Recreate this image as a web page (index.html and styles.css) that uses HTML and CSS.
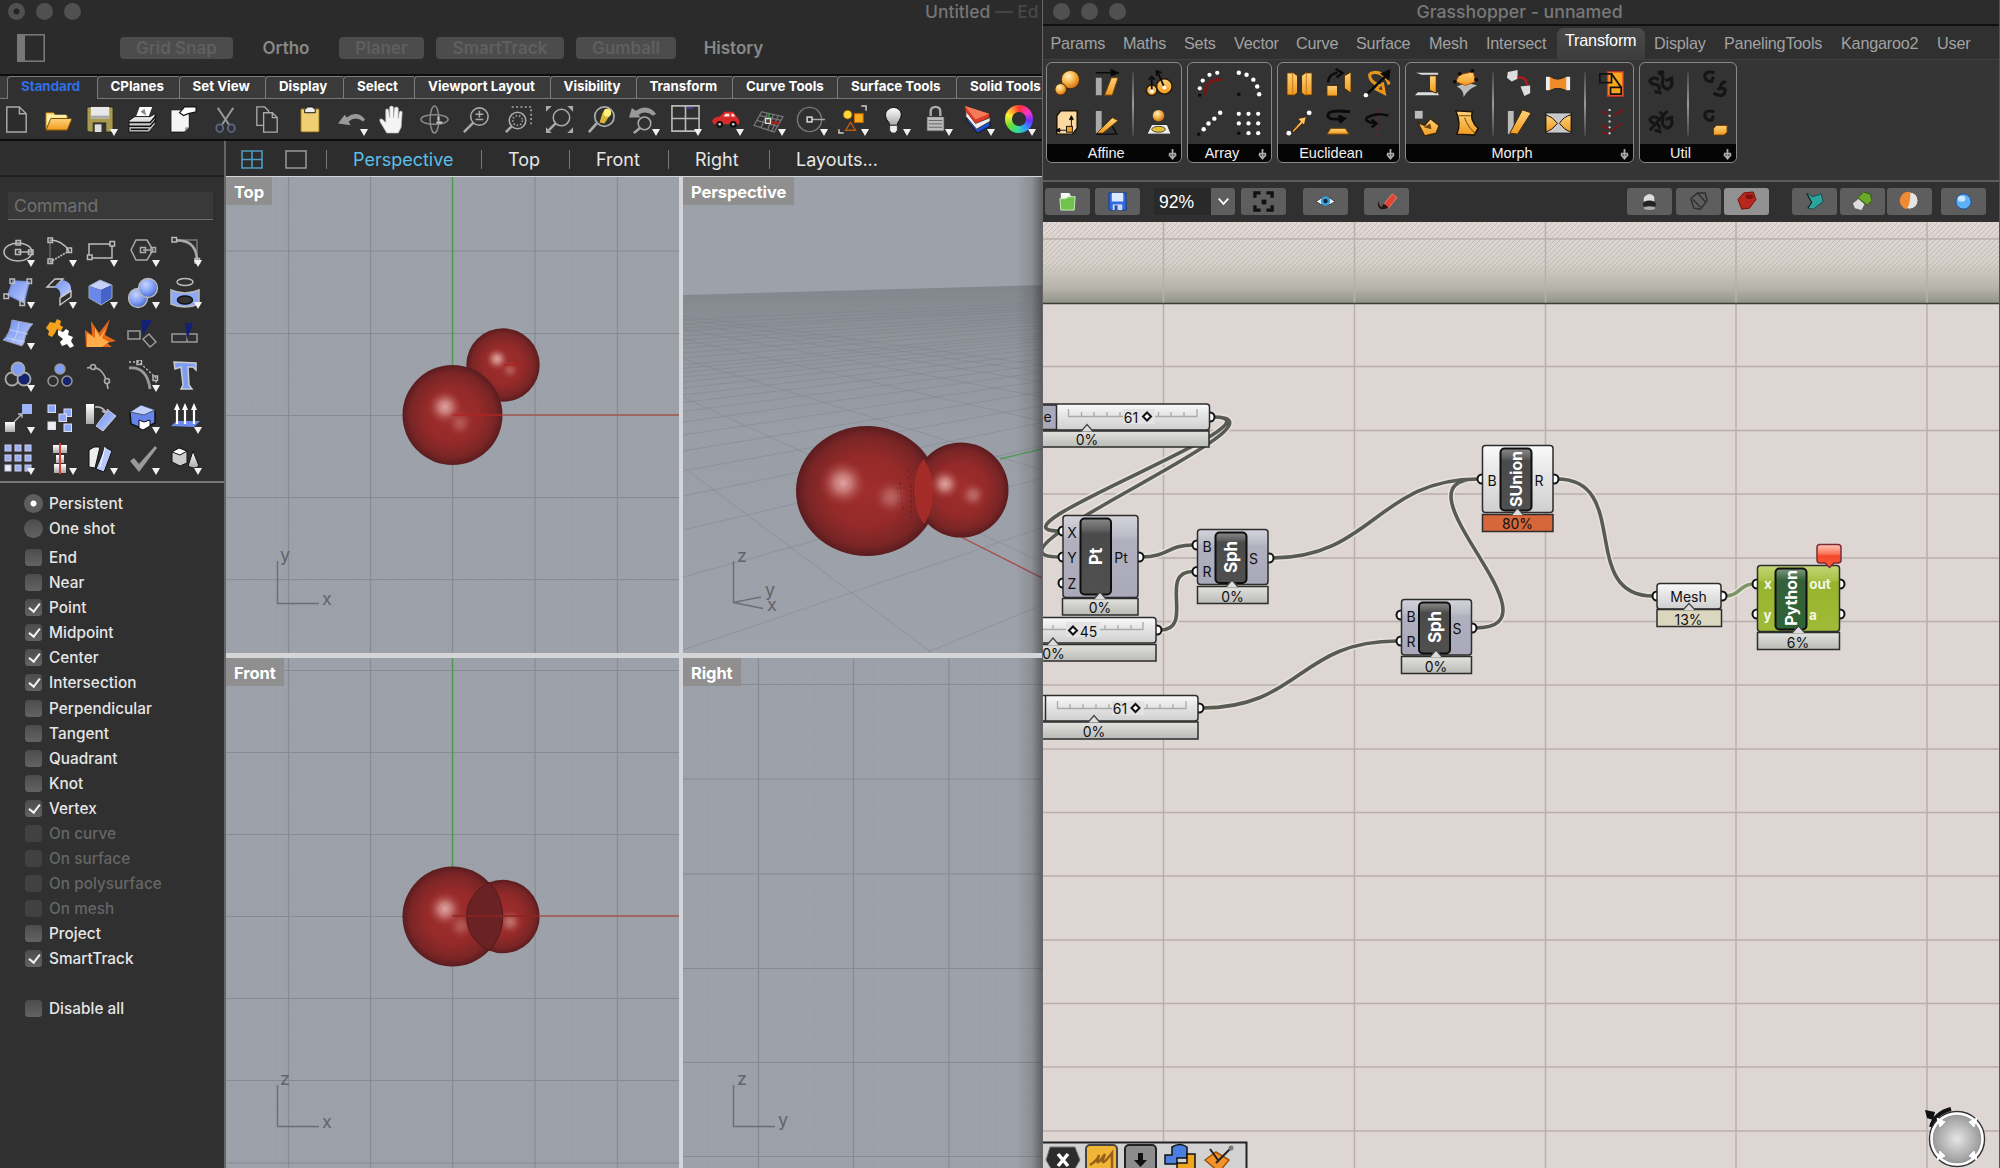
FILE: index.html
```html
<!DOCTYPE html>
<html lang="en">
<head>
<meta charset="utf-8">
<title>Rhino and Grasshopper</title>
<link rel="stylesheet" href="styles.css">
</head>
<body>
<svg class="defs" width="0" height="0">
  <defs>
    <linearGradient id="gold" x1="0" y1="0" x2="0" y2="1"><stop offset="0" stop-color="#ffd27a"/><stop offset="1" stop-color="#f09a1e"/></linearGradient>
    <linearGradient id="blue" x1="0" y1="0" x2="1" y2="1"><stop offset="0" stop-color="#6d8df0"/><stop offset="1" stop-color="#c3d0fb"/></linearGradient>
    <linearGradient id="grey" x1="0" y1="0" x2="0" y2="1"><stop offset="0" stop-color="#fff"/><stop offset="1" stop-color="#a8a8a8"/></linearGradient>
    <radialGradient id="ballGold" cx=".38" cy=".32" r=".7"><stop offset="0" stop-color="#fff0c4"/><stop offset=".5" stop-color="#f9b64a"/><stop offset="1" stop-color="#c86a10"/></radialGradient>
    <radialGradient id="ballBlue" cx=".38" cy=".32" r=".7"><stop offset="0" stop-color="#c6d6ff"/><stop offset=".6" stop-color="#7f9df5"/><stop offset="1" stop-color="#4a66c8"/></radialGradient>
    <radialGradient id="sphere" cx=".5" cy=".5" r=".5"><stop offset="0" stop-color="#a02e2d"/><stop offset=".55" stop-color="#942a29"/><stop offset=".85" stop-color="#7a2526"/><stop offset="1" stop-color="#5a1c1f"/></radialGradient>
    <radialGradient id="glow"><stop offset="0" stop-color="#dfa3a0"/><stop offset=".35" stop-color="#cf8582" stop-opacity=".85"/><stop offset="1" stop-color="#a03634" stop-opacity="0"/></radialGradient>
    <linearGradient id="ground" x1="0" y1="0" x2="0" y2="1"><stop offset="0" stop-color="#82868d"/><stop offset=".16" stop-color="#90949b"/><stop offset=".4" stop-color="#9a9ea6"/><stop offset="1" stop-color="#9ea2aa"/></linearGradient>
    <linearGradient id="edge"><stop offset="0" stop-color="#222" stop-opacity="0"/><stop offset=".6" stop-color="#222" stop-opacity=".14"/><stop offset="1" stop-color="#222" stop-opacity=".5"/></linearGradient>
    <linearGradient id="body" x1="0" y1="0" x2="0" y2="1"><stop offset="0" stop-color="#d4d4dc"/><stop offset=".25" stop-color="#bcbcc8"/><stop offset=".3" stop-color="#b0b0bf"/><stop offset="1" stop-color="#a9a9ba"/></linearGradient>
    <linearGradient id="pale" x1="0" y1="0" x2="0" y2="1"><stop offset="0" stop-color="#fafafa"/><stop offset=".35" stop-color="#e9e9e9"/><stop offset="1" stop-color="#cfcfcf"/></linearGradient>
    <linearGradient id="bar" x1="0" y1="0" x2="0" y2="1"><stop offset="0" stop-color="#e2e2df"/><stop offset="1" stop-color="#b9bbb7"/></linearGradient>
    <linearGradient id="plate" x1="0" y1="0" x2="0" y2="1"><stop offset="0" stop-color="#8a8a8a"/><stop offset=".15" stop-color="#606060"/><stop offset=".2" stop-color="#4a4a4a"/><stop offset="1" stop-color="#505050"/></linearGradient>
    <linearGradient id="pyBody" x1="0" y1="0" x2="0" y2="1"><stop offset="0" stop-color="#c3d675"/><stop offset=".22" stop-color="#aac147"/><stop offset=".25" stop-color="#97b32c"/><stop offset="1" stop-color="#a0bb38"/></linearGradient>
    <linearGradient id="pyPlate" x1="0" y1="0" x2="0" y2="1"><stop offset="0" stop-color="#7c9c7c"/><stop offset=".2" stop-color="#35603a"/><stop offset="1" stop-color="#2f6336"/></linearGradient>
    <linearGradient id="alert" x1="0" y1="0" x2="0" y2="1"><stop offset="0" stop-color="#ffc9b8"/><stop offset=".4" stop-color="#fb7458"/><stop offset=".5" stop-color="#f2492c"/><stop offset="1" stop-color="#ff5a38"/></linearGradient>
    <linearGradient id="band" x1="0" y1="0" x2="0" y2="1"><stop offset="0" stop-color="#e0d9d5"/><stop offset=".5" stop-color="#d6d0ca"/><stop offset=".82" stop-color="#b3b1a8"/><stop offset="1" stop-color="#8f9187"/></linearGradient>
    <radialGradient id="dial"><stop offset="0" stop-color="#e6e6e6"/><stop offset="1" stop-color="#8f8f8f"/></radialGradient>
    <pattern id="hatch" width="5" height="5" patternUnits="userSpaceOnUse"><path d="M0 5L5 0" stroke="#b8aca6" stroke-width=".9" opacity=".7"/></pattern>
    <pattern id="minor" width="8.23" height="8.23" patternUnits="userSpaceOnUse"><path d="M.5 0V8.23M0 .5H8.23" stroke="#8b9098" stroke-width=".8" opacity=".2" fill="none"/></pattern>
  </defs>
</svg>

<main class="screen">
<section class="rhino">
  <header class="titlebar">
    <div class="lights"><i class="dirty"></i><i></i><i></i></div>
    <h1>Untitled <span>— Ed</span></h1>
  </header>
  <div class="snapbar">
    <svg width="28" height="28" viewBox="0 0 28 28"><rect x=".8" y=".8" width="26.4" height="26.4" fill="none" stroke="#777" stroke-width="1.6"/><rect x="1" y="1" width="7" height="26" fill="#777"/></svg>
    <b class="on">Grid Snap</b><b>Ortho</b><b class="on">Planer</b><b class="on">SmartTrack</b><b class="on">Gumball</b><b>History</b>
  </div>
  <nav class="tabs">
    <a class="current">Standard</a><a>CPlanes</a><a>Set View</a><a>Display</a><a>Select</a><a>Viewport Layout</a><a>Visibility</a><a>Transform</a><a>Curve Tools</a><a>Surface Tools</a><a>Solid Tools</a>
  </nav>
  <div class="tools">
    <i><svg viewBox="0 0 32 32"><path d="M6 3H19L26 10V29H6ZM19 3V10H26" fill="#2c2c2c" stroke="#aaa" stroke-width="1.5"/></svg></i>
    <i><svg viewBox="0 0 32 32"><path d="M3 26V9H11L13 12H25V16" fill="#fbe38a" stroke="#a06d0c"/><path d="M3 27L8 15H30L25 27Z" fill="url(#gold)" stroke="#6d4a05"/><path d="M4 11H24V14H8L4 22Z" fill="#fff0a5"/></svg></i>
    <i class="dd"><svg viewBox="0 0 32 32"><path d="M2 3H29V29H4L2 27Z" fill="#a99a4c" stroke="#222"/><path d="M6 3H25V15H6Z" fill="#e8e8e8"/><path d="M6 12H25V15H6Z" fill="#aaa"/><path d="M8 19H22V29H8Z" fill="#333"/><path d="M10 21H17V29H10Z" fill="#ddd"/></svg></i>
    <i><svg viewBox="0 0 32 32"><path d="M9 14L13 3H26L22 14Z" fill="#fff"/><path d="M14 8L18 5L20 12" fill="#888"/><path d="M2 17L8 13H24L29 10V21L23 29H2Z" fill="url(#grey)" stroke="#111"/><path d="M2 19H24L30 12M2 23H24L30 16M4 26H22" stroke="#111" stroke-width="1.6" fill="none"/></svg></i>
    <i><svg viewBox="0 0 32 32"><path d="M3 6H22V24L17 29H3Z" fill="#f4f4f4" stroke="#111"/><path d="M12 9L17 3H29V8L21 10L16 12Z" fill="#fff" stroke="#111" stroke-width="1.3"/><path d="M18 24H22L17 29Z" fill="#999"/></svg></i>
    <i><svg viewBox="0 0 32 32"><path d="M8 4L20 22M24 4L12 22" stroke="#999" stroke-width="2"/><g fill="none" stroke="#5c6480" stroke-width="2"><ellipse cx="10" cy="25" rx="3.5" ry="4"/><ellipse cx="22" cy="25" rx="3.5" ry="4"/></g></svg></i>
    <i><svg viewBox="0 0 32 32" fill="#303030" stroke="#aaa" stroke-width="1.4"><path d="M5 3H13L17 7V22H5Z"/><path d="M12 9H21L26 14V29H12ZM21 9V14H26"/></svg></i>
    <i><svg viewBox="0 0 32 32"><rect x="7" y="5" width="19" height="24" rx="1" fill="#f0cf72" stroke="#6a5010"/><path d="M11 9V6L14 3H19L22 6V9Z" fill="#eee" stroke="#111"/></svg></i>
    <i class="dd"><svg viewBox="0 0 32 32"><path d="M2 20L9 11L11 14Q22 6 30 16L28 18Q20 12 13 18L15 22Z" fill="#999"/></svg></i>
    <i><svg viewBox="0 0 32 32"><path d="M10 30L3 18Q2 14 6 16L9 19V6Q10 4 12 6L13 14V3Q15 1 17 3V14L18 4Q20 2 22 4V15L23 8Q26 6 26 9L25 24L22 30Z" fill="#f4f4f4" stroke="#aaa" stroke-width=".7"/></svg></i>
    <i><svg viewBox="0 0 32 32" fill="none" stroke="#888" stroke-width="1.6"><ellipse cx="16" cy="16" rx="14" ry="5"/><ellipse cx="16" cy="16" rx="4.5" ry="14"/><path d="M20 17V13M18 19H24" stroke="#ccc" stroke-width="2"/></svg></i>
    <i><svg viewBox="0 0 32 32" fill="none" stroke="#aaa" stroke-width="1.6"><circle cx="19" cy="13" r="9"/><path d="M13 19L3 29" stroke-width="2.6"/><path d="M19 7V14M15 10.500H23M15 16H23"/></svg></i>
    <i><svg viewBox="0 0 32 32" fill="none" stroke="#aaa" stroke-width="1.6"><path d="M9 3H29V22" stroke-dasharray="2 2.500"/><circle cx="15" cy="17" r="8.500"/><circle cx="15" cy="17" r="5" stroke-dasharray="1.500 2"/><path d="M9 23L3 29" stroke-width="2.600"/></svg></i>
    <i><svg viewBox="0 0 32 32" fill="none" stroke="#aaa" stroke-width="1.600"><circle cx="18" cy="14" r="8.500"/><path d="M12 20L5 27" stroke-width="2.600"/><path d="M2 2H8L2 8ZM30 2H24L30 8ZM30 30H24L30 24ZM2 30H8L2 24Z" fill="#aaa" stroke="none"/></svg></i>
    <i><svg viewBox="0 0 32 32" fill="none"><circle cx="19" cy="13" r="10" stroke="#aaa" stroke-width="1.800"/><path d="M14 19L17 9L24 6L25 11L19 20Z" fill="#d9b735"/><circle cx="22" cy="9" r="4" fill="#fff17a"/><path d="M11 20L3 29" stroke="#aaa" stroke-width="2.800"/></svg></i>
    <i class="dd"><svg viewBox="0 0 32 32" fill="none"><path d="M1 14L4 4L8 7Q20 -1 29 10L26 12Q18 6 11 11L13 14Z" fill="#999"/><circle cx="17" cy="20" r="6.500" stroke="#aaa" stroke-width="1.600"/><path d="M12 25L6 30" stroke="#aaa" stroke-width="2.500"/></svg></i>
    <i class="dd"><svg viewBox="0 0 32 32" fill="none" stroke="#b8b8b8" stroke-width="1.700"><path d="M2 2H30V28H2ZM16 2V28M2 15H30"/><path d="M17 4H24" stroke="#44a"/></svg></i>
    <i class="dd"><svg viewBox="0 0 32 32"><path d="M1 18Q3 13 9 13L14 8H23L27 14Q30 16 29 21H3Z" fill="#d92a2a"/><path d="M13 13L15 10H19V13ZM21 10H23L25 13H21Z" fill="#fbe9e9"/><circle cx="9" cy="21" r="3.500" fill="#111"/><circle cx="23" cy="21" r="3.500" fill="#111"/><circle cx="9" cy="21" r="1.300" fill="#ddd"/><circle cx="23" cy="21" r="1.300" fill="#ddd"/></svg></i>
    <i class="dd"><svg viewBox="0 0 32 32" fill="none" stroke="#777" stroke-width="1.300"><path d="M9 8L31 13L22 29L1 22ZM7 12L29 17M4 17L26 23M15 9L8 25M21 11L15 27M26 12L19 29"/><path d="M17 10L15 17" stroke="#2b8f38" stroke-width="2"/><path d="M16 18L27 20" stroke="#b01c1c" stroke-width="2.500"/><rect x="13" y="15" width="5" height="5" stroke="#ddd"/></svg></i>
    <i class="dd"><svg viewBox="0 0 32 32" fill="none" stroke="#777" stroke-width="1.500"><circle cx="15" cy="16" r="12.500"/><path d="M15 16H31" stroke="#aaa"/><rect x="12.500" y="13.500" width="5" height="5" fill="#2f2f2f" stroke="#ddd"/></svg></i>
    <i class="dd"><svg viewBox="0 0 32 32" fill="none"><path d="M25 2H30V7M2 26V30H7" stroke="#ccc" stroke-width="1.500"/><circle cx="11" cy="11" r="4.500" fill="#ffd93a" stroke="#a25a00"/><rect x="18" y="10" width="9" height="9" fill="#f6ae1e" stroke="#d06a00"/><path d="M14 19L19 27H9Z" stroke="#b65c12" stroke-width="1.500"/></svg></i>
    <i class="dd"><svg viewBox="0 0 32 32"><path d="M12 22Q12 19 9 16Q6 10 10 6Q16 1 22 6Q26 10 22 17Q20 19 20 22Z" fill="url(#grey)" stroke="#111"/><path d="M12 22H20V27L18 30H14L12 27Z" fill="#eee" stroke="#333"/></svg></i>
    <i class="dd"><svg viewBox="0 0 32 32"><path d="M11 14V8Q11 3 16 3Q21 3 21 8V14" fill="none" stroke="#aaa" stroke-width="2.500"/><rect x="7" y="13" width="18" height="15" fill="#bbb" stroke="#333"/><path d="M9 17H23M9 20.500H23M9 24H23" stroke="#666"/></svg></i>
    <i class="dd"><svg viewBox="0 0 32 32"><path d="M5 10L15 24L29 18V23L16 30L5 17Z" fill="#1d4dd0" stroke="#111"/><path d="M4 7L14 20L29 14V18L15 26L4 13Z" fill="#eee" stroke="#333"/><path d="M3 2L28 10L28 14L14 20L4 8Z" fill="#d93a2a"/><path d="M3 2L28 10L14 16Z" fill="#f47a58"/></svg></i>
    <i class="dd wheel"><span></span></i>
  </div>
  <div class="work">
    <aside>
      <div class="side-top"></div>
      <div class="command">Command</div>
      <div class="palette">
        <i class="dd"><svg viewBox="0 0 32 32" fill="none" stroke="#bbb" stroke-width="1.500"><ellipse cx="16" cy="17" rx="14" ry="9"/><path d="M16 17H29"/><rect x="13.500" y="14.500" width="5" height="5"/><rect x="14" y="5.500" width="4.500" height="4.500"/><rect x="26.500" y="15" width="4.500" height="4.500"/></svg></i>
        <i class="dd"><svg viewBox="0 0 32 32" fill="none" stroke="#bbb" stroke-width="1.500"><path d="M6 5V27" stroke="#666"/><path d="M6 27L25 16" stroke-dasharray="2 1"/><path d="M6 5Q18 5 25 16"/><rect x="4" y="3" width="4.500" height="4.500"/><rect x="23" y="13" width="4.500" height="4.500"/><rect x="4" y="24" width="4.500" height="4.500"/></svg></i>
        <i class="dd"><svg viewBox="0 0 32 32" fill="none" stroke="#bbb" stroke-width="1.500"><rect x="4" y="9" width="23" height="14"/><rect x="25" y="6.500" width="4.500" height="4.500" fill="#2f2f2f"/><rect x="2.500" y="20" width="4.500" height="4.500" fill="#2f2f2f"/></svg></i>
        <i class="dd"><svg viewBox="0 0 32 32" fill="none" stroke="#aaa" stroke-width="1.500"><path d="M9 5H20L26 15L20 25H9L4 15Z"/><path d="M16 15H24"/><rect x="13.500" y="12.500" width="5" height="5"/><rect x="24" y="12.500" width="4.500" height="4.500"/></svg></i>
        <i class="dd"><svg viewBox="0 0 32 32" fill="none" stroke="#bbb" stroke-width="1.500"><path d="M7 5H28V26" stroke="#777"/><path d="M8 5.500Q27 5 28 25" stroke="#aaa" stroke-width="2.500"/><rect x="3" y="2.500" width="4.500" height="4.500"/><rect x="26" y="23.500" width="4.500" height="4.500"/></svg></i>

        <i class="dd"><svg viewBox="0 0 32 32" fill="none" stroke="#bbb" stroke-width="1.500"><path d="M11 4L27 5L22 26L6 18Z" fill="url(#blue)" stroke="#7a93e6"/><rect x="8" y="2" width="4.500" height="4.500"/><rect x="25" y="2" width="4.500" height="4.500"/><rect x="2" y="17" width="4.500" height="4.500"/><rect x="18" y="24" width="4.500" height="4.500"/></svg></i>
        <i class="dd"><svg viewBox="0 0 32 32" fill="none" stroke="#ccc" stroke-width="1.400"><path d="M11 2H19L11 10H3Z"/><path d="M19 3Q28 5 27 14L16 21Q18 12 10 10Z" fill="url(#blue)" stroke="none"/><path d="M27 14V20L16 28V21Z"/></svg></i>
        <i class="dd"><svg viewBox="0 0 32 32"><path d="M4 9L15 3L27 8L16 13Z" fill="#c5d2fb"/><path d="M4 9L16 13V28L4 21Z" fill="#6a88ec"/><path d="M16 13L27 8V21L16 28Z" fill="#4562c8"/><path d="M4 9L15 3L27 8V21L16 28L4 21Z" fill="none" stroke="#9ab"/></svg></i>
        <i class="dd"><svg viewBox="0 0 32 32"><circle cx="11" cy="21" r="9.500" fill="url(#ballBlue)" stroke="#bbb" stroke-width="1.300"/><circle cx="21" cy="11" r="9.500" fill="url(#ballBlue)" stroke="#bbb" stroke-width="1.300"/></svg></i>
        <i class="dd"><svg viewBox="0 0 32 32" fill="none" stroke="#bbb" stroke-width="1.500"><ellipse cx="16" cy="5" rx="8" ry="3.500"/><path d="M2 13Q16 19 30 13V27Q16 33 2 27Z" fill="#8ea8f5"/><ellipse cx="16" cy="23" rx="7.500" ry="4" fill="#333" stroke="#111"/></svg></i>

        <i class="dd"><svg viewBox="0 0 32 32"><path d="M10 2L31 6Q24 12 22 25L20 28L1 22Q8 16 10 2Z" fill="url(#blue)" stroke="#99a"/><path d="M8 12L26 16M5 20L22 24M17 4Q15 20 10 24" stroke="#dfe6ff" fill="none" opacity=".6"/></svg></i>
        <i><svg viewBox="0 0 32 32"><path d="M6 4L11 5L13 1L17 3L16 7L19 9L17 13L13 11L11 15L8 19L4 17L5 13L2 10Z" fill="#f5a21d"/><path d="M14 12L19 14L22 11L25 13L24 17L29 19L27 23L30 28L26 30L23 26L18 28L16 24L19 21L14 17Z" fill="#fff"/></svg></i>
        <i><svg viewBox="0 0 32 32"><path d="M0 12L7 17L6 3L14 15L25 1L20 17L31 23L22 25L27 29H1Z" fill="#e3691a"/><path d="M2 15L10 20L10 10L15 19L21 10L17 20L24 24L17 29H2Z" fill="#ffae4a"/></svg></i>
        <i><svg viewBox="0 0 32 32" fill="none" stroke="#999" stroke-width="1.500"><path d="M1 13H13V21H1ZM16 21L22 16L29 24L23 29Z"/><path d="M14 2H25L16 18Z" fill="#122076" stroke="none"/></svg></i>
        <i><svg viewBox="0 0 32 32" fill="none" stroke="#999" stroke-width="1.500"><path d="M3 16H28V24H3ZM18 16V24"/><path d="M16 5H24L18 22Z" fill="#122076" stroke="none"/></svg></i>

        <i class="dd"><svg viewBox="0 0 32 32" stroke="#aaa" stroke-width="1.800"><circle cx="10" cy="19" r="6.500" fill="#2f2f2f"/><circle cx="22" cy="19" r="6.500" fill="#16246e"/><circle cx="16" cy="9" r="6.500" fill="#7f9df5"/></svg></i>
        <i><svg viewBox="0 0 32 32" stroke="#999" stroke-width="1.500"><circle cx="9" cy="21" r="5" fill="#2f2f2f"/><circle cx="23" cy="21" r="5" fill="#16246e"/><circle cx="16" cy="9" r="5" fill="#7f9df5"/></svg></i>
        <i><svg viewBox="0 0 32 32" fill="none" stroke="#aaa" stroke-width="1.700"><path d="M2 8Q20 4 23 29"/><circle cx="8" cy="7" r="2.500" fill="#2f2f2f"/><circle cx="22" cy="21" r="2.500" fill="#2f2f2f"/></svg></i>
        <i class="dd"><svg viewBox="0 0 32 32" fill="none" stroke="#bbb" stroke-width="1.400"><path d="M2 2H12L29 18V29" stroke-dasharray="2 2"/><path d="M2 8Q20 6 23 29" stroke="#999" stroke-width="2.800"/><rect x="10" y="0" width="4.500" height="4.500"/><rect x="26" y="16" width="4.500" height="4.500"/></svg></i>
        <i><svg viewBox="0 0 32 32"><path d="M5 2L27 3V10L24 7L19 7L20 25L23 29H12L14 25L12 7L6 9Z" fill="#7f9df5" stroke="#ccc" stroke-width="1.500"/></svg></i>

        <i class="dd"><svg viewBox="0 0 32 32"><rect x="20" y="2" width="10" height="10" fill="#9db2f7"/><rect x="3" y="20" width="10" height="10" fill="url(#grey)"/><path d="M12 20L20 12M16 12H20V16" stroke="#bbb" fill="none" stroke-width="1.300"/></svg></i>
        <i><svg viewBox="0 0 32 32" fill="#8ba6f6" stroke="#dde" stroke-width="1"><rect x="4" y="3" width="7.500" height="7.500"/><rect x="4" y="20" width="7.500" height="7.500" fill="#eee"/><rect x="20" y="7" width="7.500" height="7.500"/><rect x="15" y="12" width="7.500" height="7.500"/><rect x="20" y="22" width="7.500" height="7.500"/></svg></i>
        <i><svg viewBox="0 0 32 32"><path d="M1 2H9V22H1Z" fill="url(#grey)"/><path d="M23 8L31 14L18 29L11 24Z" fill="url(#blue)" stroke="#ccd"/><path d="M10 5Q18 4 21 11M21 11L17 9M21 11L23 7" stroke="#bbb" fill="none" stroke-width="1.500"/></svg></i>
        <i class="dd"><svg viewBox="0 0 32 32"><path d="M3 10L14 3L28 8V21L16 27L4 22Z" fill="#6684ea" stroke="#111" stroke-width="1.500"/><path d="M3 10L14 3L28 8L17 13Z" fill="#c2cffb" stroke="#456"/><path d="M12 18L17 20L23 18V24L16 28L12 26Z" fill="#fff" stroke="#111"/></svg></i>
        <i class="dd"><svg viewBox="0 0 32 32"><path d="M2 24L8 19H31L25 25Z" fill="#6e8cf0"/><g stroke="#fff" stroke-width="2.200"><path d="M8 22V6M16 22V6M25 22V6"/></g><path d="M8 1L5 8H11ZM16 1L13 8H19ZM25 1L22 8H28Z" fill="#fff"/></svg></i>

        <i class="dd"><svg viewBox="0 0 32 32" fill="#9db0ef" stroke="#c8cff0"><rect x="3" y="2" width="6" height="6"/><rect x="13" y="2" width="6" height="6"/><rect x="23" y="2" width="6" height="6"/><rect x="3" y="12" width="6" height="6"/><rect x="13" y="12" width="6" height="6"/><rect x="23" y="12" width="6" height="6"/><rect x="3" y="22" width="6" height="6" fill="#eee"/><rect x="13" y="22" width="6" height="6"/><rect x="23" y="22" width="6" height="6"/></svg></i>
        <i class="dd"><svg viewBox="0 0 32 32"><g fill="url(#grey)"><rect x="9" y="2" width="14" height="8"/><rect x="12" y="12" width="8" height="8"/><rect x="10" y="21" width="12" height="9"/></g><path d="M16 0V31" stroke="#d63a32" stroke-width="2"/></svg></i>
        <i class="dd"><svg viewBox="0 0 32 32"><path d="M4 7L9 4H15L10 25L4 24Z" fill="#eee" stroke="#111"/><path d="M20 4L27 8L19 29L11 26Z" fill="#b9c8fb" stroke="#111"/><path d="M20 4L15 24" stroke="#fff"/></svg></i>
        <i class="dd"><svg viewBox="0 0 32 32"><path d="M3 18L7 15L12 21L28 3L30 5L12 29Z" fill="#9a9a9a"/></svg></i>
        <i class="dd"><svg viewBox="0 0 32 32" stroke="#111"><path d="M3 9L10 5L18 8V20L11 23L3 19Z" fill="#ccc"/><path d="M3 9L10 5L18 8L11 12Z" fill="#fff"/><path d="M24 8L30 23Q25 27 19 23Z" fill="url(#grey)"/></svg></i>
      </div>
      <div class="osnap">
        <label class="radio sel"><s></s>Persistent</label>
        <label class="radio"><s></s>One shot</label>
        <div class="snaps">
          <label><s></s>End</label><label><s></s>Near</label><label class="sel"><s></s>Point</label><label class="sel"><s></s>Midpoint</label><label class="sel"><s></s>Center</label><label class="sel"><s></s>Intersection</label><label><s></s>Perpendicular</label><label><s></s>Tangent</label><label><s></s>Quadrant</label><label><s></s>Knot</label><label class="sel"><s></s>Vertex</label><label class="off"><s></s>On curve</label><label class="off"><s></s>On surface</label><label class="off"><s></s>On polysurface</label><label class="off"><s></s>On mesh</label><label><s></s>Project</label><label class="sel"><s></s>SmartTrack</label>
        </div>
        <label class="all"><s></s>Disable all</label>
      </div>
    </aside>
    <div class="views">
      <nav class="viewbar">
        <span class="modes"><svg width="22" height="19" viewBox="0 0 22 19"><path d="M1 1H21V18H1ZM11 1V18M1 9.500H21" fill="none" stroke="#4e9cc0" stroke-width="1.600"/></svg><svg width="22" height="19" viewBox="0 0 22 19"><rect x="1" y="1" width="20" height="17" fill="none" stroke="#999" stroke-width="1.500"/></svg></span>
        <a class="current">Perspective</a><a>Top</a><a>Front</a><a>Right</a><a>Layouts...</a>
      </nav>
      <div class="ports">
        <div class="port"><h2>Top</h2>
          <svg viewBox="0 0 453 476">
            <rect width="453" height="476" fill="url(#minor)"/>
            <path class="grid" d="M62.500 0V476M144.500 0V476M226.500 0V476M309 0V476M391.500 0V476M0 74H453M0 156.500H453M0 238.500H453M0 320.500H453M0 402.500H453"/>
            <path d="M226.500 0V190" stroke="#4c9a50" stroke-width="1.400"/>
            <circle cx="277" cy="188" r="36.700" fill="url(#sphere)"/><circle cx="271" cy="182" r="12" fill="url(#glow)"/><circle cx="284" cy="193" r="10" fill="url(#glow)" opacity=".4"/>
            <circle cx="226.500" cy="238" r="50" fill="url(#sphere)"/><circle cx="219" cy="230" r="18" fill="url(#glow)"/><circle cx="234" cy="246" r="14" fill="url(#glow)" opacity=".4"/>
            <path d="M226.500 238H276M278 188H294" stroke="#b02422" stroke-width="1.300"/><path d="M276 238H453" stroke="#a5574f" stroke-width="1.500"/>
            <path class="axes" d="M51.500 384V426.500H93"/><text x="54" y="384">y</text><text x="96" y="428">x</text>
          </svg></div>
        <div class="port"><h2>Perspective</h2>
          <svg viewBox="0 0 359 476">
            <path d="M0 118L359 108V476H0Z" fill="url(#ground)"/>
            <path d="M0 473L1130 88M0 400L1130 88M0 353L1130 88M0 319L1130 88M0 294L1130 88M0 274L1130 88M0 258L1130 88M0 245L1130 88M0 234.500L1130 88M0 225.500L1130 88M0 218L1130 88M0 211L1130 88M0 205L1130 88M0 200L1130 88M0 195.500L1130 88M0 191.400L1130 88M0 187.700L1130 88M0 181L1130 88M0 176L1130 88M0 171L1130 88M0 167L1130 88M0 163L1130 88M0 159L1130 88M0 154L1130 88M0 151L1130 88M0 147L1130 88M0 143L1130 88" class="floor"/>
            <path d="M0 290L248 475M0 220L359 385M0 182L359 293M0 162L359 244M0 152L359 220M0 146L359 205M0 142L359 195M0 139L359 188M245 475L359 428" class="floor"/>
            <path d="M317 282L359 272" stroke="#4f9c52" stroke-width="1.300"/><path d="M278 360L359 401" stroke="#a8484a" stroke-width="1.300"/>
            <ellipse cx="184" cy="314" rx="71" ry="65" fill="url(#sphere)"/>
            <circle cx="278" cy="313" r="47.500" fill="url(#sphere)"/>
            <path d="M240.500 282Q230 296 231 315Q232 335 241 347Q251 333 250 313Q250 295 240.500 282Z" fill="#a52b29"/>
            <path d="M225 292L229 298L223 303M228 308V344M217 305L220 334M214 310L216 330" stroke="#641e20" fill="none" stroke-dasharray="3 2"/>
            <circle cx="160" cy="306" r="24" fill="url(#glow)"/><circle cx="208" cy="320" r="19" fill="url(#glow)" opacity=".5"/><circle cx="262" cy="307" r="16" fill="url(#glow)"/><circle cx="290" cy="318" r="14" fill="url(#glow)" opacity=".55"/>
            <path class="axes" d="M50.500 384V425.500L78 420M50.500 425.500L80 431.500"/><text x="54" y="385">z</text><text x="82" y="419">y</text><text x="84" y="434">x</text>
            <rect x="333" width="26" height="476" fill="url(#edge)"/>
          </svg></div>
        <div class="port"><h2>Front</h2>
          <svg viewBox="0 0 453 510">
            <rect width="453" height="510" fill="url(#minor)"/>
            <path class="grid" d="M62.500 0V510M144.500 0V510M226.500 0V510M309 0V510M391.500 0V510M0 12.500H453M0 94.500H453M0 176.500H453M0 258.500H453M0 340.500H453M0 422.500H453M0 505H453"/>
            <path d="M226.500 0V210" stroke="#4c9a50" stroke-width="1.400"/>
            <circle cx="277" cy="258.500" r="36.700" fill="url(#sphere)"/><circle cx="226.500" cy="258.500" r="50" fill="url(#sphere)"/>
            <circle cx="219" cy="251" r="18" fill="url(#glow)"/><circle cx="235" cy="268" r="14" fill="url(#glow)" opacity=".4"/><circle cx="284" cy="264" r="13" fill="url(#glow)" opacity=".6"/>
            <path d="M263.500 224.500A50 50 0 0 1 263.500 292.500A36.700 36.700 0 0 1 263.500 224.500Z" fill="#6a2224" stroke="#551a1c"/>
            <path d="M226.500 258H313" stroke="#8e2422" stroke-width="1.400"/><path d="M313 258H453" stroke="#a5574f" stroke-width="1.500"/>
            <path class="axes" d="M51.500 427V468.500H93"/><text x="54" y="427">z</text><text x="96" y="470">x</text>
          </svg></div>
        <div class="port"><h2>Right</h2>
          <svg viewBox="0 0 359 510">
            <rect width="359" height="510" fill="url(#minor)"/>
            <path class="grid" d="M75.500 0V510M170.500 0V510M266 0V510M0 26.500H359M0 121H359M0 216H359M0 310.500H359M0 404.500H359M0 498.500H359"/>
            <path class="axes" d="M50.500 427V468.500H92"/><text x="54" y="427">z</text><text x="95" y="468">y</text>
            <rect x="333" width="26" height="510" fill="url(#edge)"/>
          </svg></div>
      </div>
    </div>
  </div>
</section>

<section class="hopper">
  <header class="titlebar">
    <div class="lights"><i></i><i></i><i></i></div>
    <h1>Grasshopper - unnamed</h1>
  </header>
  <nav class="menu"><a>Params</a><a>Maths</a><a>Sets</a><a>Vector</a><a>Curve</a><a>Surface</a><a>Mesh</a><a>Intersect</a><a class="current">Transform</a><a>Display</a><a>PanelingTools</a><a>Kangaroo2</a><a>User</a></nav>
  <div class="ribbon">
    <div class="group">
      <div class="cells">
        <div class="pair"><svg viewBox="0 0 32 32"><circle cx="19" cy="12" r="9.500" fill="url(#ballGold)" stroke="#40280a"/><circle cx="9" cy="22" r="6" fill="url(#ballGold)" stroke="#40280a"/></svg><svg viewBox="0 0 32 32"><path d="M5 9L9 4H26V22L21 28H5Z" fill="#fbd9a0" stroke="#1a1205" stroke-width="1.500"/><path d="M20 12V22M6 24H15M20 9L18 13H22ZM4 24L8 22V26Z" stroke="#111"/><rect x="15" y="20" width="6" height="6" fill="#f6a428" stroke="#111"/></svg></div>
        <div class="pair"><svg viewBox="0 0 32 32"><path d="M5 10H11V28H5Z" fill="#aaa"/><path d="M21 10H28L22 28H14Z" fill="url(#gold)" stroke="#6e3f05"/><path d="M5 5H22M28 5L21 2V8Z" stroke="#0a0a0a" stroke-width="1.500"/></svg><svg viewBox="0 0 32 32"><path d="M5 4H11V22L5 28Z" fill="#aaa"/><path d="M6 27L22 11L28 14L12 27Z" fill="url(#gold)" stroke="#6e3f05"/><path d="M5 28H28M22 20L26 27" stroke="#0a0a0a" stroke-width="1.500"/></svg></div>
        <hr>
        <div class="pair"><svg viewBox="0 0 32 32"><g fill="url(#gold)" stroke="#2a1a02" stroke-width="1.500"><circle cx="8" cy="23" r="5.500"/><circle cx="21" cy="19" r="8"/></g><path d="M8 24V11M5 12L8 9L11 12M21 20L14 4M13 8L13 3L18 5" stroke="#0a0a0a" stroke-width="1.800" fill="none"/><circle cx="8" cy="24" r="2" fill="#fff"/><circle cx="21" cy="20" r="2" fill="#fff"/></svg><svg viewBox="0 0 32 32"><circle cx="15" cy="9" r="6" fill="url(#ballGold)"/><path d="M8 18H24L28 28H3Z" fill="#eee" stroke="#222"/><ellipse cx="15" cy="23" rx="7" ry="3" fill="#e0c030" stroke="#543"/></svg></div>
      </div>
      <footer><span>Affine</span><svg viewBox="0 0 10 12"><path d="M5 0V10M1 6L5 10.500L9 6M1 5H9"/></svg></footer>
    </div>
    <div class="group">
      <div class="cells">
        <div class="pair"><svg viewBox="0 0 32 32" fill="#fff"><path d="M11 28Q11 11 29 12" fill="none" stroke="#7c1414" stroke-width="3"/><circle cx="6" cy="28" r="1.600" fill="#0a0a0a"/><circle cx="6" cy="21" r="2.200"/><circle cx="9" cy="13" r="2.200"/><circle cx="16" cy="7" r="2.200"/><circle cx="24" cy="5" r="2.200"/></svg><svg viewBox="0 0 32 32" fill="#fff"><circle cx="5" cy="28" r="1.800" fill="#0a0a0a"/><circle cx="10" cy="23" r="2.300"/><circle cx="15" cy="17" r="2.300"/><circle cx="21" cy="12" r="2.300"/><circle cx="27" cy="6" r="2.300"/></svg></div>
        <div class="pair"><svg viewBox="0 0 32 32" fill="#fff"><circle cx="6" cy="27" r="1.800" fill="#0a0a0a"/><circle cx="6" cy="5" r="2.300"/><circle cx="14" cy="7" r="2.300"/><circle cx="21" cy="12" r="2.300"/><circle cx="25" cy="19" r="2.300"/><circle cx="27" cy="27" r="2.300"/></svg><svg viewBox="0 0 32 32" fill="#fff"><circle cx="6" cy="7" r="2.200"/><circle cx="16" cy="7" r="2.200"/><circle cx="26" cy="7" r="2.200"/><circle cx="6" cy="17" r="2.200"/><circle cx="16" cy="17" r="2.200"/><circle cx="26" cy="17" r="2.200"/><circle cx="6" cy="27" r="1.800" fill="#0a0a0a"/><circle cx="16" cy="27" r="2.200"/><circle cx="26" cy="27" r="2.200"/></svg></div>
      </div>
      <footer><span>Array</span><svg viewBox="0 0 10 12"><path d="M5 0V10M1 6L5 10.500L9 6M1 5H9"/></svg></footer>
    </div>
    <div class="group">
      <div class="cells">
        <div class="pair"><svg viewBox="0 0 32 32"><path d="M3 5H10L14 8V25L11 28H3Z" fill="url(#gold)" stroke="#40280a"/><path d="M29 5H22L18 8V25L21 28H29Z" fill="url(#gold)" stroke="#40280a"/><path d="M9 5V28M23 5V28" stroke="#c8761a"/></svg><svg viewBox="0 0 32 32"><circle cx="5" cy="27" r="2.500" fill="#fff"/><circle cx="26" cy="6" r="2.500" fill="#fff"/><path d="M8 25L17 15L14 12L23 10L21 19L19 17L10 26Z" fill="url(#gold)" stroke="#40280a"/></svg></div>
        <div class="pair"><svg viewBox="0 0 32 32"><rect x="4" y="18" width="11" height="11" fill="url(#gold)" stroke="#40280a"/><path d="M22 8L29 4V26L22 21Z" fill="url(#gold)" stroke="#40280a"/><path d="M5 15Q6 6 15 5M13 1L20 5L14 10" fill="none" stroke="#0a0a0a" stroke-width="2.500"/></svg><svg viewBox="0 0 32 32"><path d="M8 22H23L27 28H4Z" fill="url(#gold)" stroke="#6b3c05"/><path d="M28 5Q5 2 5 9Q6 14 20 12M16 9L22 12L17 16" fill="none" stroke="#0a0a0a" stroke-width="3"/></svg></div>
        <div class="pair"><svg viewBox="0 0 32 32"><path d="M8 6Q18 1 26 12L28 17M8 6Q7 14 18 18L15 22L23 26L21 15" fill="none" stroke="#e8951e" stroke-width="3.200"/><path d="M5 27L28 5M28 3L21 6L27 11Z" stroke="#0a0a0a" stroke-width="2.500"/><circle cx="4" cy="28" r="2.300" fill="#fff"/></svg><svg viewBox="0 0 32 32"><path d="M16 3V30" stroke="#8a1a1a" stroke-dasharray="3 3" stroke-width="1.500"/><path d="M13 17Q2 15 5 11Q15 5 27 9M10 13L15 17L10 21" fill="none" stroke="#0a0a0a" stroke-width="2.500"/></svg></div>
      </div>
      <footer><span>Euclidean</span><svg viewBox="0 0 10 12"><path d="M5 0V10M1 6L5 10.500L9 6M1 5H9"/></svg></footer>
    </div>
    <div class="group">
      <div class="cells">
        <div class="pair"><svg viewBox="0 0 32 32"><path d="M4 5H27V7H10ZM6 25H26L28 28H3Z" fill="#ddd"/><path d="M18 8H25V26L18 23Z" fill="url(#gold)" stroke="#40280a"/></svg><svg viewBox="0 0 32 32"><rect x="3" y="4" width="8" height="8" fill="#bbb"/><path d="M6 16L13 19L19 12L28 19L25 27L13 30Z" fill="url(#gold)" stroke="#40280a" stroke-width="1.500"/><path d="M12 21L19 17L20 23Z" fill="#7a4408"/></svg></div>
        <div class="pair"><svg viewBox="0 0 32 32"><path d="M6 19Q13 22 13 30Q17 22 27 18L16 15Z" fill="#bbb"/><path d="M9 7L23 4L25 14L15 18L5 14Z" fill="url(#gold)" stroke="#b8560c"/><g fill="#0a0a0a"><circle cx="9" cy="6" r="2"/><circle cx="22" cy="3" r="2"/><circle cx="26" cy="12" r="2"/><circle cx="4" cy="14" r="2"/></g></svg><svg viewBox="0 0 32 32"><path d="M5 4L22 5Q19 14 28 22L24 29L6 28Q11 18 5 4Z" fill="url(#gold)" stroke="#1c1204" stroke-width="1.500"/><path d="M8 9H20M14 11Q18 22 25 27" stroke="#6e4707" fill="none"/></svg></div>
        <hr>
        <div class="pair"><svg viewBox="0 0 32 32"><path d="M4 4L14 2V11L8 14L3 10Z" fill="#ddd"/><path d="M14 10Q23 8 24 18" fill="none" stroke="#a41c1c" stroke-width="3"/><path d="M17 19L27 18V26L21 29Z" fill="#ddd"/></svg><svg viewBox="0 0 32 32"><path d="M4 4H10V26L4 28Z" fill="#bbb"/><path d="M6 27L19 3L28 6L14 28Z" fill="url(#gold)" stroke="#40280a"/></svg></div>
        <div class="pair"><svg viewBox="0 0 32 32"><path d="M3 9H8Q15 14 23 9H28V23H23Q15 19 8 23H3Z" fill="#f08c2a" stroke="#222"/><path d="M3 9H7V23H3ZM24 9H28V23H24Z" fill="#eee"/></svg><svg viewBox="0 0 32 32"><path d="M3 6H29V27H3Z" fill="#c8c8c8" stroke="#111"/><path d="M3 8Q10 10 15 17Q9 24 3 26ZM29 8Q21 10 17 17Q22 24 29 26Z" fill="url(#gold)" stroke="#111"/></svg></div>
        <hr>
        <div class="pair"><svg viewBox="0 0 32 32"><path d="M12 4H28V29H12Z" fill="#f6a71e" stroke="#d32" stroke-width="1.500"/><path d="M4 6H16V15H4ZM15 20H26V27H15ZM16 6L26 20" fill="none" stroke="#111" stroke-width="1.800"/></svg><svg viewBox="0 0 32 32"><path d="M14 2V30" stroke="#ddd" stroke-dasharray="2 4" stroke-width="2"/><path d="M6 4L12 8M28 3L18 9M6 19L13 23M26 17L16 25M6 26L12 28" stroke="#7c1616" stroke-width="2"/></svg></div>
      </div>
      <footer><span>Morph</span><svg viewBox="0 0 10 12"><path d="M5 0V10M1 6L5 10.500L9 6M1 5H9"/></svg></footer>
    </div>
    <div class="group">
      <div class="cells">
        <div class="pair"><svg viewBox="0 0 32 32" fill="none" stroke="#151515" stroke-width="3.200"><path d="M13 12Q7 8 4 13Q5 17 10 17Q14 17 14 23M9 24L16 26M14 5Q19 8 17 14Q16 20 22 22Q29 19 26 12M20 13L28 10M12 5L19 4"/></svg><svg viewBox="0 0 32 32" fill="none" stroke="#151515" stroke-width="3"><path d="M13 12Q7 8 4 13Q5 17 10 17Q14 17 14 23M9 24L16 26M14 5Q19 8 17 14Q16 20 22 22Q29 19 26 12M20 13L28 10M4 24L22 4"/></svg></div>
        <hr>
        <div class="pair"><svg viewBox="0 0 32 32" fill="none" stroke="#151515" stroke-width="3.200"><path d="M16 5Q6 2 6 9Q7 14 13 14L15 9M28 15Q24 13 22 19M15 26Q26 32 27 23Q25 19 19 22"/></svg><svg viewBox="0 0 32 32" fill="none"><path d="M16 5Q6 2 6 9Q7 14 13 14L15 9" stroke="#151515" stroke-width="3.200"/><path d="M15 22L18 19H29V26L26 29H15Z" fill="url(#gold)" stroke="#6b3c05"/></svg></div>
      </div>
      <footer><span>Util</span><svg viewBox="0 0 10 12"><path d="M5 0V10M1 6L5 10.500L9 6M1 5H9"/></svg></footer>
    </div>
  </div>
  <div class="bar">
    <div class="left">
      <button><svg viewBox="0 0 22 22"><path d="M4 2H13L16 8H4Z" fill="#f5f5f5"/><path d="M3 8H9L12 6H19L18 20H4Z" fill="#6fc24c" stroke="#cfeac2"/></svg></button>
      <button><svg viewBox="0 0 22 22"><path d="M2 2H20V20H3L2 19Z" fill="#2f6be0" stroke="#123a8c"/><rect x="5" y="2" width="12" height="9" fill="#dce8ff"/><rect x="6" y="14" width="10" height="6" fill="#cdd8ee"/><rect x="8" y="15" width="3" height="5" fill="#2450a8"/></svg></button>
      <span class="zoom">92%</span><button class="drop"><svg viewBox="0 0 22 22"><path d="M6 8L11 13.500L16 8" fill="none" stroke="#fff" stroke-width="1.800"/></svg></button>
      <button><svg viewBox="0 0 22 22"><path d="M2 7V2H8M14 2H20V7M20 15V20H14M8 20H2V15" fill="none" stroke="#111" stroke-width="3.500"/><rect x="9" y="9" width="5" height="5" fill="#111"/></svg></button>
      <button><svg viewBox="0 0 22 22"><path d="M1 11Q11 2 21 11Q11 19 1 11Z" fill="#f2f6fa" stroke="#333"/><circle cx="11" cy="10.500" r="5" fill="#3b9ed8"/><circle cx="11" cy="10.500" r="2.300" fill="#0a2740"/></svg></button>
      <button><svg viewBox="0 0 22 22"><path d="M8 14L17 3L22 7L13 18Z" fill="#e04434" stroke="#f59a8a" stroke-width=".7"/><path d="M3 10Q0 18 6 19Q11 19 13 17L8 13L6 17Q3 16 3 10Z" fill="#2b1414"/></svg></button>
    </div>
    <div class="right">
      <button><svg viewBox="0 0 22 22"><path d="M5 7Q11 0 16 6V11H5Z" fill="#ddd"/><ellipse cx="11" cy="14" rx="7" ry="4" fill="#222"/><ellipse cx="11" cy="18" rx="6" ry="2" fill="#aaa"/></svg></button>
      <button><svg viewBox="0 0 22 22"><path d="M3 8L10 2H18L20 10L13 19L6 18ZM5 9L13 17M10 2L18 11" fill="none" stroke="#303030" stroke-width="1.500"/></svg></button>
      <button class="hot"><svg viewBox="0 0 22 22"><path d="M2 9L8 2L18 1L21 9L14 18L6 19Z" fill="#b8271d" stroke="#701008"/><ellipse cx="14" cy="6" rx="4" ry="2.500" fill="#7e120c"/></svg></button>
      <button><svg viewBox="0 0 22 22"><path d="M3 2L9 6L18 3L20 11L10 19L4 18L8 12Z" fill="#2da39d" stroke="#134e4b"/><path d="M3 3L8 12L4 18" stroke="#111" fill="none"/></svg></button>
      <button><svg viewBox="0 0 22 22"><path d="M1 13L7 8L13 14L10 20L3 18Z" fill="#ddd"/><path d="M6 7L12 1L19 3L21 10L16 15Z" fill="#68a82a" stroke="#2f5310"/></svg></button>
      <button><svg viewBox="0 0 22 22"><circle cx="11" cy="10" r="9" fill="#e4e4e4" stroke="#555"/><path d="M12 1A9 9 0 0 0 8 19Q12 14 12 1Z" fill="#ed8a32"/></svg></button>
      <button><svg viewBox="0 0 22 22"><circle cx="11" cy="11" r="8" fill="#5fb0f2" stroke="#16488e"/><ellipse cx="9" cy="8" rx="4" ry="3" fill="#c9e6ff"/></svg></button>
    </div>
  </div>
  <svg class="canvas" viewBox="1043 222 956 946">
    <rect x="1042" y="222" width="957" height="946" fill="#ded6d2"/>
    <rect x="1042" y="222" width="957" height="82" fill="url(#band)"/><rect x="1042" y="222" width="957" height="50" fill="url(#hatch)"/>
    <path d="M1163.500 222V1168M1354.500 222V1168M1545.500 222V1168M1736 222V1168M1927 222V1168M1042 239H1999M1042 366.500H1999M1042 430.500H1999M1042 494H1999M1042 558H1999M1042 621.500H1999M1042 685H1999M1042 749H1999M1042 812.500H1999M1042 876H1999M1042 940H1999M1042 1003.500H1999M1042 1067H1999M1042 1131H1999" stroke="#b9afaa" stroke-width="1.500"/>
    <path d="M1042 303.500H1999" stroke="#3a3c38" stroke-width="1.500"/>
    <g class="halo"><path d="M1213 417C1296 417 978 531 1059 531M1213 417C1308 417 962 557 1059 557M1142 557C1168 557 1168 545 1193 545M1160 630C1196 630 1157 571.500 1193 571.500M1272 558C1372 558 1378 479 1478 479M1202 708C1300 708 1299 641 1397 641M1475 628C1570 628 1385 479 1478 479M1557 479C1632 479 1578 596 1653 596M1725 596C1740 596 1740 584 1753 584"/></g>
    <g class="wire"><path d="M1213 417C1296 417 978 531 1059 531M1213 417C1308 417 962 557 1059 557M1142 557C1168 557 1168 545 1193 545M1160 630C1196 630 1157 571.500 1193 571.500M1272 558C1372 558 1378 479 1478 479M1202 708C1300 708 1299 641 1397 641M1475 628C1570 628 1385 479 1478 479M1557 479C1632 479 1578 596 1653 596"/><path d="M1725 596C1740 596 1740 584 1753 584" stroke="#7c9466"/></g>
    <g class="grips"><circle cx="1210" cy="417" r="4.500"/><circle cx="1063" cy="531" r="4.500"/><circle cx="1063" cy="557" r="4.500"/><circle cx="1063" cy="583" r="4.500"/><circle cx="1139" cy="557" r="4.500"/><circle cx="1157" cy="630" r="4.500"/><circle cx="1197" cy="545" r="4.500"/><circle cx="1197" cy="571.500" r="4.500"/><circle cx="1269" cy="558" r="4.500"/><circle cx="1199" cy="708" r="4.500"/><circle cx="1401" cy="615" r="4.500"/><circle cx="1401" cy="641" r="4.500"/><circle cx="1472" cy="628" r="4.500"/><circle cx="1482" cy="479" r="4.500"/><circle cx="1554" cy="479" r="4.500"/><circle cx="1657" cy="596" r="4.500"/><circle cx="1722" cy="596" r="4.500"/><circle cx="1757" cy="584" r="4.500"/><circle cx="1757" cy="614" r="4.500"/><circle cx="1840" cy="584" r="4.500"/><circle cx="1840" cy="614" r="4.500"/></g>

    <g class="node">
      <rect x="1030" y="404" width="179.500" height="26" rx="3" fill="url(#pale)"/><path d="M1042 405H1056.500V429.500H1042Z" fill="#a9a9ba"/>
      <path d="M1030 431H1209V447H1030Z" fill="url(#bar)"/><path class="tip" d="M1081 431.500L1087 424.500L1093 431.500"/>
      <path class="ticks" d="M1068.500 409V416.500H1197V409M1081.500 412V416M1094 412V416M1107 412V416M1120 412V416M1158.500 412V416M1171 412V416M1184 412V416"/><rect x="1123" y="409" width="32" height="15" fill="#e3e3e3" stroke="none"/>
      <path class="gem" d="M1147 412.500L1151 416.500L1147 420.500L1143 416.500Z"/>
    </g>
    <text x="1131" y="422.500">61</text><text x="1087" y="445">0%</text><text x="1047.500" y="422">e</text>

    <g class="node"><rect x="1063" y="515.500" width="75" height="82" rx="3" fill="url(#body)"/><rect class="plate" x="1080.500" y="518.500" width="30.500" height="76" rx="4"/><path d="M1062.500 598.500H1138V615H1062.500Z" fill="url(#bar)"/><path class="tip" d="M1094 599L1100 592L1106 599"/></g>
    <text x="1072" y="537.500">X</text><text x="1072" y="563">Y</text><text x="1072" y="588.500">Z</text><text x="1121" y="563">Pt</text><text x="1100" y="613">0%</text><text class="name" transform="translate(1102 556.500) rotate(-90)">Pt</text>

    <g class="node"><rect x="1030" y="617.500" width="126" height="25.500" rx="3" fill="url(#pale)"/><path d="M1030 644.500H1156V661H1030Z" fill="url(#bar)"/><path class="tip" d="M1047 645L1053 638L1059 645"/>
      <path class="ticks" d="M1040 629.500H1143V622M1053 625V630M1105 625V630M1118 625V630M1131 625V630"/><rect x="1066" y="622" width="34" height="15" fill="#e3e3e3" stroke="none"/><path class="gem" d="M1073 626.500L1077 630.500L1073 634.500L1069 630.500Z"/></g>
    <text x="1088.500" y="636.500">45</text><text x="1053.500" y="659">0%</text>

    <g class="node"><rect x="1197.500" y="529.500" width="70.500" height="55" rx="3" fill="url(#body)"/><rect class="plate" x="1215.500" y="532.500" width="31" height="50.500" rx="4"/><path d="M1197.500 586.500H1268V603.500H1197.500Z" fill="url(#bar)"/><path class="tip" d="M1226 587L1232 580L1238 587"/></g>
    <text x="1207" y="551.500">B</text><text x="1207" y="577">R</text><text x="1253.500" y="564">S</text><text x="1232.500" y="601.500">0%</text><text class="name" transform="translate(1236.500 557) rotate(-90)">Sph</text>

    <g class="node"><rect x="1030" y="695.500" width="168" height="25.500" rx="3" fill="url(#pale)"/><path d="M1045.500 695.500V721"/><path d="M1030 722H1198V739H1030Z" fill="url(#bar)"/><path class="tip" d="M1088 722.500L1094 715.500L1100 722.500"/>
      <path class="ticks" d="M1057.500 701V708.500H1186V701M1070 704V708M1083 704V708M1096 704V708M1109 704V708M1147 704V708M1160 704V708M1173 704V708"/><rect x="1112" y="701" width="32" height="14" fill="#e3e3e3" stroke="none"/><path class="gem" d="M1135.500 704L1139.500 708L1135.500 712L1131.500 708Z"/></g>
    <text x="1120" y="714">61</text><text x="1094" y="736.500">0%</text>

    <g class="node"><rect x="1401.500" y="599.500" width="70" height="55.500" rx="3" fill="url(#body)"/><rect class="plate" x="1419" y="602.500" width="31" height="51" rx="4"/><path d="M1401.500 656.500H1471.500V673.500H1401.500Z" fill="url(#bar)"/><path class="tip" d="M1430 657L1436 650L1442 657"/></g>
    <text x="1411" y="621.500">B</text><text x="1411" y="646.500">R</text><text x="1457" y="634">S</text><text x="1436" y="671.500">0%</text><text class="name" transform="translate(1440.500 627) rotate(-90)">Sph</text>

    <g class="node"><rect x="1482.500" y="445.500" width="70.500" height="67" rx="3" fill="url(#pale)"/><rect class="plate" x="1500.500" y="448.500" width="31" height="62" rx="4"/><path d="M1482.500 514.500H1553V531.500H1482.500Z" fill="#d6673b"/><path class="tip" d="M1511.500 515L1517.500 508L1523.500 515" fill="#d6673b" stroke="#8c3b1c"/></g>
    <text x="1492" y="486">B</text><text x="1539" y="486">R</text><text x="1517.500" y="529">80%</text><text class="name long" transform="translate(1522 479) rotate(-90)">SUnion</text>

    <g class="node"><rect x="1657" y="583.500" width="64" height="25.500" rx="3" fill="url(#pale)"/><path d="M1657 609.500H1721.500V626.500H1657Z" fill="#dbd7bf"/><path class="tip" d="M1683 610L1689 603.500L1695 610" fill="#dbd7bf"/></g>
    <text x="1688.500" y="602">Mesh</text><text x="1688.500" y="624.500">13%</text>

    <g class="node"><rect x="1757.500" y="565.500" width="82" height="66" rx="3" fill="url(#pyBody)"/><rect class="plate green" x="1775.500" y="568.500" width="31" height="61" rx="4"/><path d="M1757.500 632.500H1839.500V649.500H1757.500Z" fill="url(#bar)"/><path class="tip" d="M1792 633L1798.500 626L1805 633"/><path d="M1820 544.500H1838Q1841 544.500 1841 547.500V560Q1841 563 1838 563H1834L1829.500 567.500L1825 563H1820Q1817 563 1817 560V547.500Q1817 544.500 1820 544.500Z" fill="url(#alert)" stroke="#7d2b3a"/></g>
    <g class="light"><text x="1768" y="589">x</text><text x="1767.500" y="620">y</text><text x="1820" y="589">out</text><text x="1813" y="620">a</text></g><text x="1798" y="647.500">6%</text><text class="name long" transform="translate(1797 598) rotate(-90)">Python</text>

    <path d="M1030 1142.500H1246.500V1180H1030Z" fill="#d2d2d2" stroke="#222" stroke-width="2"/>
    <path d="M1050 1147H1075L1080 1160L1072 1174H1054L1046 1160Z" fill="#2c2c2c" stroke="#777"/><path d="M1058 1154L1068 1166M1068 1154L1058 1166" stroke="#fff" stroke-width="3.500"/>
    <rect x="1086" y="1145" width="31" height="30" rx="4" fill="#f2b637" stroke="#444" stroke-width="2"/><path d="M1090 1165Q1098 1160 1099 1155Q1094 1170 1105 1154Q1098 1171 1112 1153V1168" fill="none" stroke="#96601a" stroke-width="2.500"/>
    <rect x="1125" y="1145" width="31" height="30" rx="4" fill="#8c8c8c" stroke="#222" stroke-width="2"/><path d="M1138 1153H1143V1160H1147L1140.500 1167L1134 1160H1138Z" fill="#111"/>
    <path d="M1172 1147Q1180 1142 1187 1147V1158H1177V1164H1165V1155H1172Z" fill="#4a7fe0" stroke="#111" stroke-width="1.500"/><path d="M1187 1154H1195V1170H1177V1163H1187Z" fill="#f0a51e" stroke="#111" stroke-width="1.500"/>
    <path d="M1205 1160L1216 1152L1229 1160L1219 1172Z" fill="#f2942a" stroke="#a25404" stroke-width="1.500"/><path d="M1216 1163L1231 1148M1210 1149L1218 1160" stroke="#222" stroke-width="2"/><circle cx="1231" cy="1148" r="2.500" fill="#777"/>
    <path d="M1925 1110L1935 1112L1933 1120L1927 1118Z" fill="#111"/><path d="M1931 1127Q1935 1113 1951 1109" fill="none" stroke="#111" stroke-width="4"/>
    <circle cx="1957" cy="1139" r="27.500" fill="url(#dial)" stroke="#333" stroke-width="1.500"/><circle cx="1957" cy="1139" r="25.500" fill="none" stroke="#fff" stroke-width="2.500"/>
    <path d="M1937 1118L1945 1122L1940 1127ZM1977 1118L1969 1122L1974 1127ZM1937 1160L1945 1156L1940 1151ZM1977 1160L1969 1156L1974 1151Z" fill="#fff" stroke="#fff"/>
  </svg>
</section>
</main>
</body>
</html>
```

FILE: styles.css
```css
* { box-sizing: border-box; }
body { margin: 0; background: #2b2b2b; font-family: Inter, "Liberation Sans", sans-serif; color: #e6e6e6; }
.defs { position: absolute; }
.screen { display: flex; width: 2000px; height: 1168px; overflow: hidden; }
i { font-style: normal; }
svg { display: block; }

/* Rhino window */
.rhino { width: 1042px; display: flex; flex-direction: column; background: #2b2b2b; overflow: hidden; }
.titlebar { height: 24px; flex: none; display: flex; align-items: center; padding-left: 8px; }
.lights { display: flex; gap: 11px; margin-top: -2px; }
.lights i { width: 17px; height: 17px; border-radius: 50%; background: #505050; }
.lights .dirty { background: radial-gradient(circle, #222 0 2.5px, #505050 3.5px); }
h1 { margin: -1px 0 0; font-size: 17.5px; font-weight: 500; color: #757575; white-space: nowrap; line-height: 20px; }
.rhino h1 { margin-left: 844px; }
.rhino h1 span { color: #484848; }

.snapbar { height: 50px; flex: none; display: grid; grid-template-columns: 103.5px 113px 106px 85px 12px 128px 12px 100px 115px; padding: 10px 0 0 16.5px; align-items: start; }
.snapbar b { font-size: 17px; font-weight: 600; color: #888; text-align: center; height: 22px; line-height: 22px; margin-top: 2.5px; border-radius: 4px; }
.snapbar b.on { background: #4c4c4c; color: #5f5f5f; }
.snapbar b:nth-of-type(5) { grid-column: 8; }
.snapbar b:nth-of-type(4) { grid-column: 6; }

.tabs { height: 25px; flex: none; display: grid; grid-template-columns: 89.5px 82px 86.5px 78px 71px 135.5px 86px 96.5px 105px 119px 100px; padding-left: 7px; background: #3b3b3b; border-top: 2px solid #0c0c0c; border-bottom: 1px solid #777; }
.tabs a { border-left: 1.5px solid #7c7c7c; border-top: 1px solid #7c7c7c; border-radius: 4px 0 0 0; padding-left: 13px; font-size: 13.3px; line-height: 18px; font-weight: 700; color: #fff; white-space: nowrap; }
.tabs .current { color: #2f6fe8; background: #303030; height: 23px; }

.tools { height: 42px; flex: none; display: grid; grid-template-columns: repeat(25, 41.78px); margin-left: -4px; border-bottom: 2px solid #0c0c0c; background: #303030; }
.tools i, .palette i { position: relative; display: grid; place-items: center; }
.palette svg { width: 32px; height: 32px; }
.tools svg { width: 31px; height: 31px; margin-top: 1px; }
.dd::after { content: ""; position: absolute; left: 30px; top: 30px; border: 4px solid transparent; border-top: 7.5px solid #f2f2f2; border-bottom: 0; }
.wheel span { width: 28px; height: 28px; border-radius: 50%; background: radial-gradient(circle, #303030 0 6.5px, transparent 7.5px), conic-gradient(#f33, #f3c 15%, #63f 28%, #39f 40%, #3d9 52%, #6d3 65%, #fe3 80%, #f83 92%, #f33); }

.work { flex: 1; display: flex; min-height: 0; }
aside { width: 226px; flex: none; background: #303030; border-right: 2px solid #666; display: flex; flex-direction: column; }
.side-top { height: 36px; background: #2f2f2f; border-bottom: 2px solid #1f1f1f; }
.command { margin: 15px 11px 0 8px; height: 28px; background: #393939; border-bottom: 1.5px solid #707070; padding-left: 6px; font-size: 17.5px; line-height: 28px; color: #707070; letter-spacing: -.1px; }
.palette { margin: 10px 0 0 -3px; display: grid; grid-template-columns: repeat(5, 41.7px); grid-template-rows: repeat(6, 41.7px); }
.osnap { margin-top: 1px; border-top: 2px solid #777; padding: 8px 0 0 24px; display: flex; flex-direction: column; flex: 1; }
.osnap label { display: flex; align-items: center; height: 25.06px; font-size: 15.3px; font-weight: 500; letter-spacing: .05px; }
.osnap s { width: 17px; height: 17px; border-radius: 3.5px; background: linear-gradient(#4c4c4c, #636363); margin: 0 7px 0 1px; }
.osnap .radio s { width: 19px; height: 19px; border-radius: 50%; margin: 0 6px 0 0; }
.osnap .radio.sel s { background: radial-gradient(circle, #fff 0 2.5px, #5e5e5e 3.5px); }
.osnap .sel:not(.radio) s::after { content: ""; display: block; width: 5px; height: 9px; margin: 2px 0 0 6px; border: solid #f4f4f4; border-width: 0 2px 2px 0; transform: rotate(38deg); }
.osnap .off { color: #666; }
.osnap .off s { background: #414141; }
.snaps { margin-top: 4px; }
.osnap .all { margin-top: 25px; }

.views { flex: 1; min-width: 0; display: flex; flex-direction: column; background: #2d2d2d; }
.viewbar { height: 35px; flex: none; display: grid; grid-template-columns: 100px 155px 88px 99px 101px 1fr; align-items: center; padding-top: 1px; }
.modes { display: flex; gap: 22.5px; padding-left: 14.5px; }
.viewbar a { font-size: 18px; border-left: 1.5px solid #777; height: 19px; line-height: 19px; padding-left: 26px; white-space: nowrap; }
.viewbar a.current { color: #5cbfe8; }
.ports { flex: 1; display: grid; grid-template: 476px 510px / 453px 359px; gap: 5px 4px; background: #d3d5d9; padding-top: 1px; min-height: 0; }
.port { position: relative; background: #9da1a9; overflow: hidden; }
.port h2 { position: absolute; left: 0; top: 0; margin: 0; padding: 0 8px; font-size: 16.5px; font-weight: 700; line-height: 30px; height: 28px; color: #fff; background: #8f8f8f; letter-spacing: -.1px; z-index: 1; }
.port svg { width: 100%; height: 100%; }
.grid { stroke: #868a92; stroke-width: 1.2; fill: none; }
.floor { stroke: #7c8088; stroke-width: .8; opacity: .5; fill: none; }
.axes { stroke: #6b6e75; stroke-width: 1.4; fill: none; }
.port text { font-size: 18px; fill: #62656c; }

/* Grasshopper window */
.hopper { width: 958px; display: flex; flex-direction: column; background: #303030; border-left: 1px solid #666; border-right: 1px solid #555; }
.hopper .titlebar { height: 26px; background: #2c2c2c; border-bottom: 2px solid #111; padding-left: 9.5px; }
.hopper h1 { margin-left: 291px; font-size: 17.7px; color: #787878; }
.menu { height: 33px; flex: none; display: grid; grid-template-columns: 72.5px 61px 50px 62px 60px 73px 57px 71px 88px 70px 117px 96px 1fr; padding-left: 7.5px; font: 16.2px/34px "Liberation Sans", Arial, sans-serif; letter-spacing: -.2px; color: #a2a2a2; white-space: nowrap; background: #303030; }
.menu .current { background: linear-gradient(#4a4a4a, #3c3c3c); border-radius: 7px 7px 0 0; color: #fff; line-height: 25px; padding-left: 8px; margin-top: 2px; }
.menu .current ~ a { padding-left: 9px; }
.ribbon { height: 121px; flex: none; display: grid; grid-template-columns: 136.5px 85px 123px 229px 98px; gap: 5px; padding: 2px 3px 0 2.5px; align-items: start; background: #353535; border-top: 1px solid #404040; }
.group { height: 101px; border: 1.5px solid #8a8a8a; border-radius: 6px; display: flex; flex-direction: column; overflow: hidden; background: #333; }
.cells { flex: 1; display: flex; padding: 1px 0 0 1.5px; }
.pair { width: 39px; display: grid; grid-template-rows: 39px 39px; place-items: center; }
.pair svg { width: 31px; height: 31px; }
.cells hr { width: 2px; height: 64px; margin: 8px 6px; border: 0; background: linear-gradient(#444, #999, #444); flex: none; }
.group footer { height: 18px; background: #050505; display: flex; align-items: center; font: 14.5px/17px "Liberation Sans", Arial, sans-serif; color: #f0f0f0; }
.group footer span { flex: 1; text-align: center; }
.group footer svg { width: 9px; height: 11px; margin: 2px 4px 0 2px; fill: none; stroke: #aaa; stroke-width: 2; }

.bar { height: 42px; flex: none; display: flex; justify-content: space-between; padding: 6px 13px 0 2px; background: #303030; border-top: 2px solid #5c5c5c; }
.bar .left { display: grid; grid-template-columns: 50px 59px 57px 30px 62px 61px 45px; }
.bar .right { display: grid; grid-template-columns: 49px 48px 68px 48px 47px 54px 45px; }
.bar button { border: 0; padding: 0; width: 44.5px; height: 27px; border-radius: 3px; background: #5e5e5e; display: grid; place-items: center; }
.bar button svg { width: 21px; height: 21px; }
.bar .hot { background: #929292; }
.bar .drop { width: 24px; border-radius: 0 3px 3px 0; }
.zoom { height: 27px; font: 17.5px/28px "Liberation Sans", Arial, sans-serif; color: #fff; padding-left: 5px; background: #292929; }

.canvas { flex: 1; width: 956px; }
.canvas text { font-size: 14px; text-anchor: middle; fill: #111; }
.canvas .name { font-size: 17px; font-weight: 700; fill: #fff; letter-spacing: -.2px; }
.canvas .long { font-size: 16.3px; }
.canvas .light text { font-size: 13.5px; font-weight: 700; fill: #f4f6e4; }
.wire, .halo { fill: none; stroke: #585a54; stroke-width: 3.6; }
.halo { stroke: #e8e2dc; stroke-width: 6.5; }
.grips { fill: #fff; stroke: #111; stroke-width: 2; }
.node { stroke: #2d2d2d; stroke-width: 1.5; }
.plate { fill: url(#plate); stroke: #0f0f0f; stroke-width: 2; }
.plate.green { fill: url(#pyPlate); }
.node .tip { fill: #ddd; stroke: #444; stroke-width: 1.2; }
.node .ticks { stroke: #aaa; stroke-width: 1.3; fill: none; }
.node .gem { fill: #fff; stroke: #111; stroke-width: 2; }
```
